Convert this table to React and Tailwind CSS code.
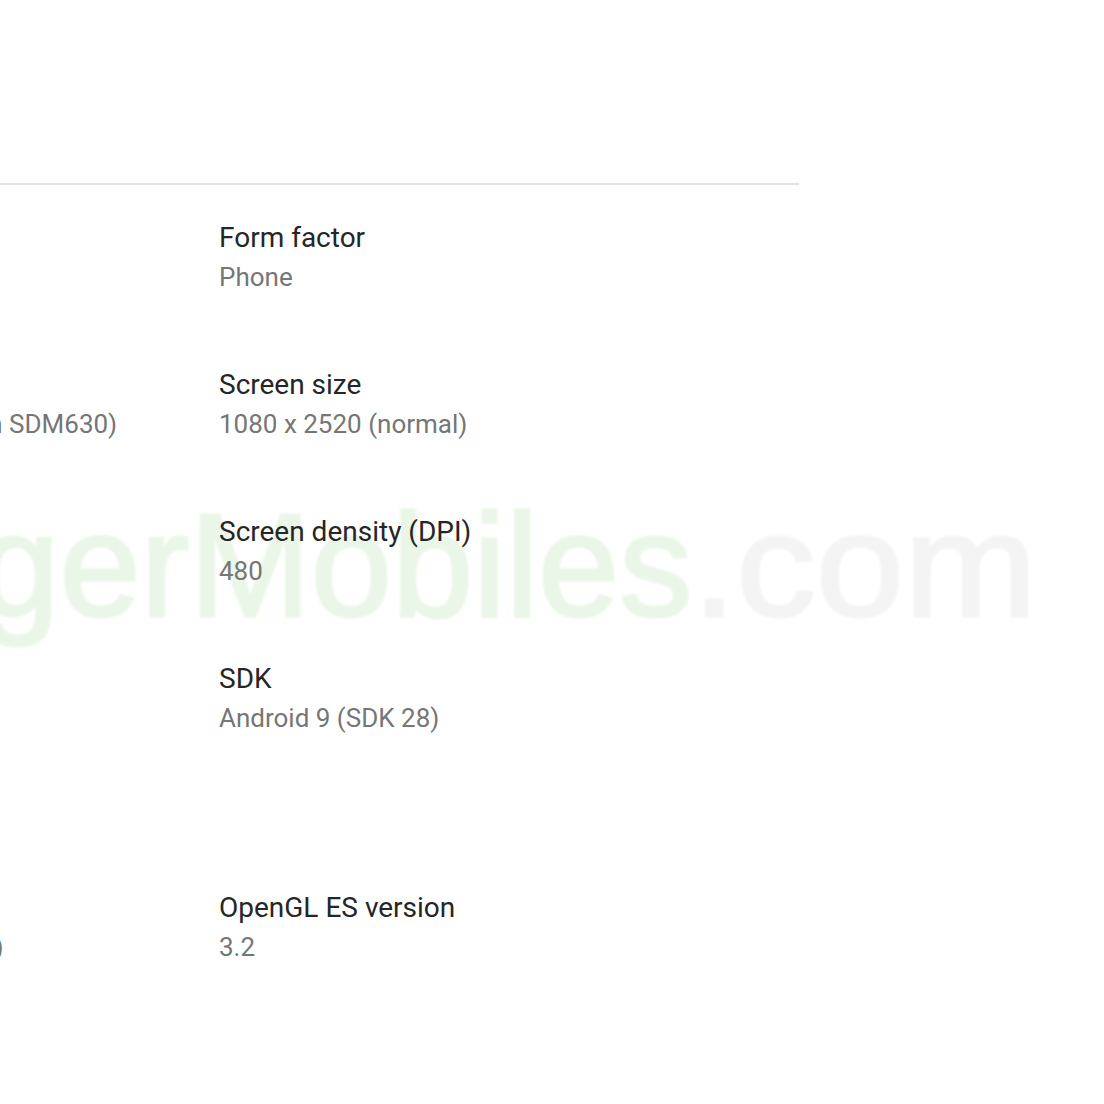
import React from "react";

const font = { fontFamily: "Roboto, 'Noto Sans', Arial, sans-serif" };

const classes = {
  page: "relative w-[1104px] h-[1104px] overflow-hidden bg-white",
  content: "relative z-10",
  top: "h-[183px]",
  divider: "w-[799px] h-[2px] bg-[#e3e3e3]",
  grid: "grid grid-cols-[352px_1fr] -ml-[133px] pt-[33px]",
  label: "text-[28px] leading-[40px] text-[#262626] whitespace-nowrap",
  value: "text-[26px] leading-[38px] text-[#767676] whitespace-nowrap",
  watermark:
    "pointer-events-none absolute z-0 left-[-138px] top-[493px] text-[146px] leading-none whitespace-nowrap blur-[1px] select-none",
};

const rows = [
  { left: "", right: ["Form factor", "Phone"], gap: "mb-[69px]" },
  { left: "(Qualcomm SDM630)", right: ["Screen size", "1080 x 2520 (normal)"], gap: "mb-[69px]" },
  { left: "", right: ["Screen density (DPI)", "480"], gap: "mb-[69px]" },
  { left: "", right: ["SDK", "Android 9 (SDK 28)"], gap: "mb-[151px]" },
  { left: "ARMv8 (64)", right: ["OpenGL ES version", "3.2"], gap: "" },
];

const Cell = ({ label, value }) => (
  <div className="flex flex-col">
    <span className={classes.label}>{label || "\u00a0"}</span>
    <span className={classes.value}>{value || "\u00a0"}</span>
  </div>
);

export default function App() {
  return (
    <div className={classes.page} style={font}>
      {/* watermark */}
      <div
        className={classes.watermark}
        style={{ fontFamily: "'Liberation Sans', Arial, sans-serif" }}
      >
        <span className="text-[#eaf6e7] [-webkit-text-stroke:3px_#eaf6e7]">TigerMobiles</span>
        <span className="inline-block origin-left scale-x-[1.09] text-[#f4f4f4] [-webkit-text-stroke:3px_#f4f4f4]">
          .com
        </span>
      </div>

      <div className={classes.content}>
        <div className={classes.top}></div>
        <div className={classes.divider}></div>

        <div className={classes.grid}>
          {rows.map((row, i) => (
            <React.Fragment key={i}>
              <div className={row.gap}>
                <div className="flex flex-col">
                  <span className={classes.label}>{"\u00a0"}</span>
                  <span className={classes.value}>{row.left || "\u00a0"}</span>
                </div>
              </div>
              <div className={row.gap}>
                <Cell label={row.right[0]} value={row.right[1]} />
              </div>
            </React.Fragment>
          ))}
        </div>
      </div>
    </div>
  );
}
